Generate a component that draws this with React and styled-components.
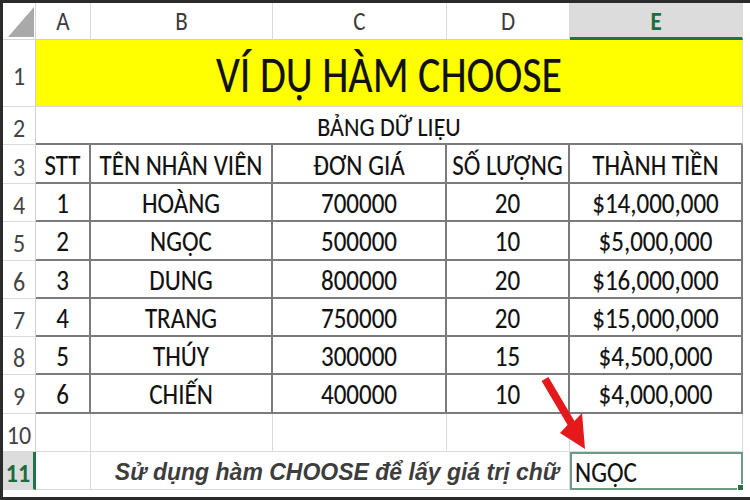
import React from "react";
import styled, { createGlobalStyle, css } from "styled-components";

const Global = createGlobalStyle`
  html, body { margin: 0; padding: 0; background: #ffffff; }
  body { font-family: "Carlito", "Lato", sans-serif; }
`;

const Frame = styled.div`
  position: relative;
  width: 750px;
  height: 500px;
  box-sizing: border-box;
  border-top: 3px solid #2b2b2b;
  border-left: 3px solid #2b2b2b;
  border-bottom: 3px solid #2b2b2b;
  overflow: hidden;
  background: #fff;
`;

const Sheet = styled.div`
  display: grid;
  grid-template-columns: 33px 55px 182px 174px 123px 173px;
  grid-template-rows: 37px 67px 38px 39px repeat(8, 38.25px);
  width: 740px;
  font-family: "Carlito", "Lato", sans-serif;
`;

const Corner = styled.div`
  position: relative;
  box-sizing: border-box;
  border-right: 1px solid #d6d6d6;
  border-bottom: 1px solid #d6d6d6;
  background: #fff;
`;

const CornerTri = styled.svg`
  position: absolute;
  right: 1px;
  bottom: 2px;
`;

const ColHead = styled.div`
  box-sizing: border-box;
  display: flex;
  align-items: center;
  justify-content: center;
  font-size: 23px;
  color: #3c3c3c;
  background: #ffffff;
  border-right: 1px solid #dadada;
  border-bottom: 1px solid #d0d0d0;
  ${(p) =>
    p.$sel &&
    css`
      background: #dcdcdc;
      color: #1e6b40;
      font-weight: 700;
      border-bottom: 3px solid #217346;
      padding-top: 2px;
    `}
`;

const RowHead = styled.div`
  box-sizing: border-box;
  display: flex;
  align-items: center;
  justify-content: center;
  padding-top: 4px;
  font-size: 24px;
  color: #444;
  background: #ffffff;
  border-right: 1px solid #d0d0d0;
  border-bottom: 1px solid #dadada;
  ${(p) =>
    p.$sel &&
    css`
      background: #dcdcdc;
      color: #1e6b40;
      font-weight: 700;
      border-right: 3px solid #217346;
    `}
`;

const Cell = styled.div`
  box-sizing: border-box;
  display: flex;
  align-items: center;
  justify-content: ${(p) => p.$align || "center"};
  grid-column: span ${(p) => p.$span || 1};
  padding-top: 3px;
  padding-left: ${(p) => p.$padL || 0}px;
  font-size: ${(p) => p.$size || 25}px;
  color: #111;
  -webkit-text-stroke: 0.1px #111;
  background: ${(p) => p.$bg || "#fff"};
  white-space: nowrap;
  border-right: 1px solid #dadada;
  border-bottom: 1px solid #dadada;
  ${(p) =>
    p.$table &&
    css`
      border-right: 2px solid #7b7b7b;
      border-bottom: 2px solid #7b7b7b;
    `}
  ${(p) =>
    p.$topEdge &&
    css`
      border-bottom: 2px solid #7b7b7b;
    `}
`;

const Txt = styled.span`
  display: inline-block;
  transform: scaleY(${(p) => p.$sy || 1.12});
`;

const Note = styled.span`
  font-family: "Liberation Sans", Arial, sans-serif;
  font-style: italic;
  font-weight: 700;
  font-size: 23px;
  color: #3d3d3d;
  -webkit-text-stroke: 0;
  display: inline-block;
  transform: scaleY(1.08);
`;

const Selected = styled(Cell)`
  position: relative;
  justify-content: flex-start;
  padding-left: 3px;
  border: 2px solid #6f9a82;
`;

const Handle = styled.span`
  position: absolute;
  right: -3px;
  bottom: -3px;
  width: 5px;
  height: 5px;
  background: #217346;
  border: 1px solid #fff;
`;

const Overlay = styled.svg`
  position: absolute;
  left: -3px;
  top: -3px;
  pointer-events: none;
`;

const cols = ["A", "B", "C", "D", "E"];
const header = ["STT", "TÊN NHÂN VIÊN", "ĐƠN GIÁ", "SỐ LƯỢNG", "THÀNH TIỀN"];
const rows = [
  ["1", "HOÀNG", "700000", "20", "$14,000,000"],
  ["2", "NGỌC", "500000", "10", "$5,000,000"],
  ["3", "DUNG", "800000", "20", "$16,000,000"],
  ["4", "TRANG", "750000", "20", "$15,000,000"],
  ["5", "THÚY", "300000", "15", "$4,500,000"],
  ["6", "CHIẾN", "400000", "10", "$4,000,000"],
];

export default function App() {
  return (
    <>
      <Global />
      <Frame>
        <Sheet>
          <Corner>
            <CornerTri width="26" height="30" viewBox="0 0 26 30">
              <polygon points="0,30 26,30 26,0" fill="#a9a9a9" />
            </CornerTri>
          </Corner>
          {cols.map((c) => (
            <ColHead key={c} $sel={c === "E"}>
              <Txt>{c}</Txt>
            </ColHead>
          ))}

          <RowHead>
            <Txt>1</Txt>
          </RowHead>
          <Cell $span={5} $bg="#ffff00" $size={42}>
            <Txt $sy={1.22}>VÍ DỤ HÀM CHOOSE</Txt>
          </Cell>

          <RowHead>
            <Txt>2</Txt>
          </RowHead>
          <Cell $span={5} $topEdge $size={24}>
            <Txt>BẢNG DỮ LIỆU</Txt>
          </Cell>

          <RowHead>
            <Txt>3</Txt>
          </RowHead>
          {header.map((h) => (
            <Cell key={h} $table>
              <Txt>{h}</Txt>
            </Cell>
          ))}

          {rows.map((r, i) => (
            <React.Fragment key={i}>
              <RowHead>
                <Txt>{i + 4}</Txt>
              </RowHead>
              {r.map((v, j) => (
                <Cell key={j} $table>
                  <Txt>{v}</Txt>
                </Cell>
              ))}
            </React.Fragment>
          ))}

          <RowHead>
            <Txt>10</Txt>
          </RowHead>
          {cols.map((c) => (
            <Cell key={c} />
          ))}

          <RowHead $sel>
            <Txt>11</Txt>
          </RowHead>
          <Cell />
          <Cell $span={3} $padL={14}>
            <Note>Sử dụng hàm CHOOSE để lấy giá trị chữ</Note>
          </Cell>
          <Selected>
            <Txt>NGỌC</Txt>
            <Handle />
          </Selected>
        </Sheet>
        <Overlay width="750" height="500" viewBox="0 0 750 500">
          <polygon
            points="541.6,381 548.4,377 574.4,421 582,413 585,449 560,433 567.6,425"
            fill="#e5191c"
          />
        </Overlay>
      </Frame>
    </>
  );
}
